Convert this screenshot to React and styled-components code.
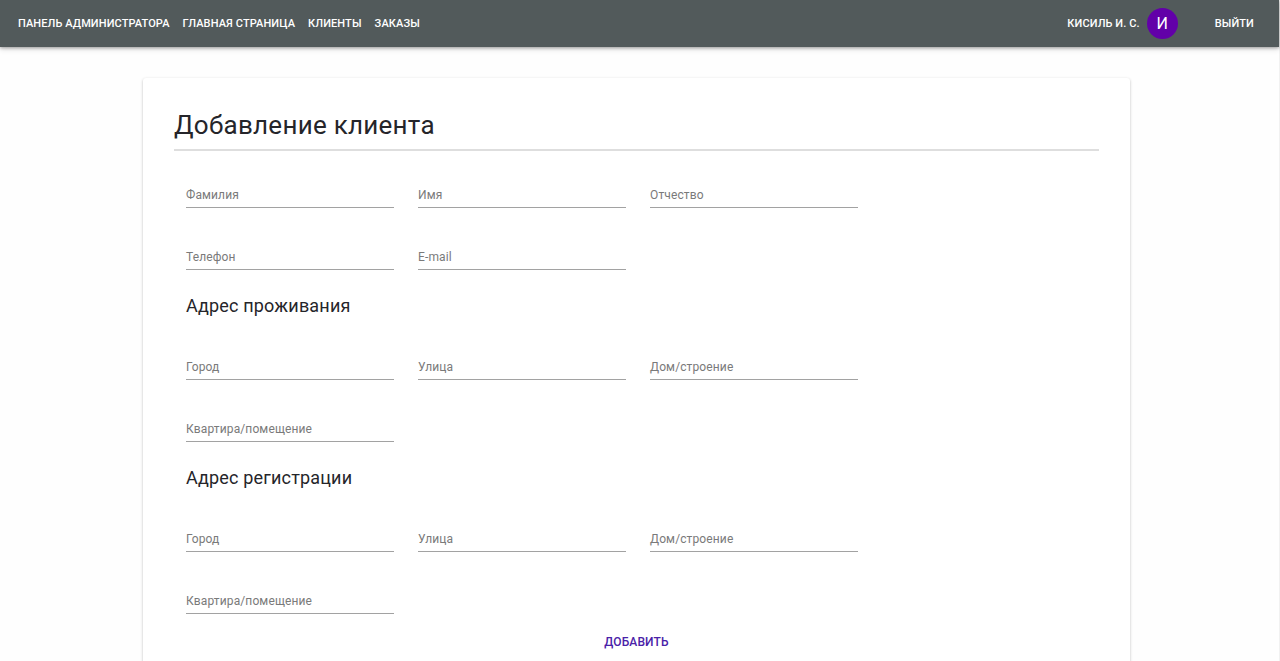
import React, { useId, useState } from 'react';
import styled, { createGlobalStyle } from 'styled-components';

const GlobalStyle = createGlobalStyle`
  *, *::before, *::after { box-sizing: border-box; }
  body {
    margin: 0;
    background: #fefefe;
    color: #25252a;
    font-family: Roboto, "Liberation Sans", sans-serif;
    font-size: 12px;
    letter-spacing: 0.01em;
    scrollbar-width: none;
  }
`;

const Page = styled.div`
  min-height: 100vh;
  border-right: 1px solid #f1f1f1;
`;

const Header = styled.header`
  display: flex;
  align-items: center;
  justify-content: space-between;
  min-height: 47px;
  padding: 0 25px 0 18px;
  background: #525a5b;
  color: #fff;
  box-shadow: 0 1px 3px rgba(0, 0, 0, 0.3), 0 2px 6px rgba(0, 0, 0, 0.14);
`;

const Nav = styled.nav`
  display: flex;
  gap: 13px;
`;

const Account = styled.div`
  display: flex;
  align-items: center;
`;

const NavLink = styled.a`
  color: inherit;
  font-size: 11px;
  font-weight: 500;
  line-height: 18px;
  letter-spacing: 0.01em;
  text-decoration: none;
  text-transform: uppercase;
  white-space: nowrap;
`;

const Avatar = styled.span`
  display: flex;
  align-items: center;
  justify-content: center;
  width: 31px;
  height: 31px;
  margin: 0 37px 0 7px;
  border-radius: 50%;
  background: #6200a8;
  font-size: 16px;
`;

const TextButton = styled.button`
  padding: 0;
  border: 0;
  background: none;
  color: ${({ $primary }) => ($primary ? '#4a22a8' : '#fff')};
  font-family: inherit;
  font-size: ${({ $primary }) => ($primary ? '12px' : '11px')};
  font-weight: 500;
  line-height: 18px;
  letter-spacing: 0.01em;
  text-transform: uppercase;
  cursor: pointer;
`;

const Main = styled.main`
  padding: 31px 149px 31px 143px;
`;

const Card = styled.section`
  padding: 31px;
  border-radius: 3px;
  background: #fff;
  box-shadow: 0 1px 3px rgba(0, 0, 0, 0.24), 0 1px 1px rgba(0, 0, 0, 0.1);
`;

const Title = styled.h1`
  margin: 0;
  padding-bottom: 8px;
  border-bottom: 2px solid #dedede;
  font-size: 26px;
  font-weight: 400;
  line-height: 32px;
  letter-spacing: 0.01em;
`;

const Form = styled.form`
  display: flex;
  flex-direction: column;
  padding: 0 12px;
`;

const Group = styled.fieldset`
  min-width: 0;
  margin: 0;
  padding: 0;
  border: 0;
`;

const GroupTitle = styled.h2`
  margin: 24px 0 0;
  font-size: 18px;
  font-weight: 400;
  line-height: 24px;
  letter-spacing: 0.01em;
`;

const Fields = styled.div`
  display: grid;
  grid-template-columns: repeat(3, minmax(0, 208px));
  column-gap: 24px;
  row-gap: 37px;
  padding-top: 37px;
`;

const NameFields = styled(Fields)`
  padding-top: 32px;
`;

const FieldBox = styled.div`
  display: grid;
  height: 25px;

  > * { grid-area: 1 / 1; }
`;

const Label = styled.label`
  z-index: 1;
  color: #7a7a7a;
  font-size: 12px;
  line-height: 24px;
  letter-spacing: 0.01em;
  pointer-events: none;
  visibility: ${({ $filled }) => ($filled ? 'hidden' : 'visible')};
`;

const Input = styled.input`
  width: 100%;
  padding: 0;
  border: 0;
  border-bottom: 1px solid #a2a2a2;
  border-radius: 0;
  outline: 0;
  background: transparent;
  font-family: inherit;
  font-size: 12px;

  &:focus { border-bottom-color: #4a22a8; }
`;

const Actions = styled.div`
  display: flex;
  justify-content: center;
  padding-top: 19px;
`;

function Field({ label, type = 'text' }) {
  const id = useId();
  const [value, setValue] = useState('');
  return (
    <FieldBox>
      <Label htmlFor={id} $filled={value !== ''}>{label}</Label>
      <Input id={id} type={type} value={value} onChange={(e) => setValue(e.target.value)} />
    </FieldBox>
  );
}

function AddressGroup({ title }) {
  const id = useId();
  return (
    <Group aria-labelledby={id}>
      <GroupTitle id={id}>{title}</GroupTitle>
      <Fields>
        <Field label="Город" />
        <Field label="Улица" />
        <Field label="Дом/строение" />
        <Field label="Квартира/помещение" />
      </Fields>
    </Group>
  );
}

export default function App() {
  return (
    <>
      <GlobalStyle />
      <Page>
        <Header>
          <Nav>
            <NavLink href="#admin">Панель администратора</NavLink>
            <NavLink href="#home">Главная страница</NavLink>
            <NavLink href="#clients">Клиенты</NavLink>
            <NavLink href="#orders">Заказы</NavLink>
          </Nav>
          <Account>
            <NavLink href="#profile">Кисиль И. С.</NavLink>
            <Avatar>И</Avatar>
            <TextButton type="button">Выйти</TextButton>
          </Account>
        </Header>
        <Main>
          <Card>
            <Title>Добавление клиента</Title>
            <Form onSubmit={(e) => e.preventDefault()}>
              <NameFields>
                <Field label="Фамилия" />
                <Field label="Имя" />
                <Field label="Отчество" />
              </NameFields>
              <Fields>
                <Field label="Телефон" type="tel" />
                <Field label="E-mail" type="email" />
              </Fields>
              <AddressGroup title="Адрес проживания" />
              <AddressGroup title="Адрес регистрации" />
              <Actions>
                <TextButton type="submit" $primary>Добавить</TextButton>
              </Actions>
            </Form>
          </Card>
        </Main>
      </Page>
    </>
  );
}
